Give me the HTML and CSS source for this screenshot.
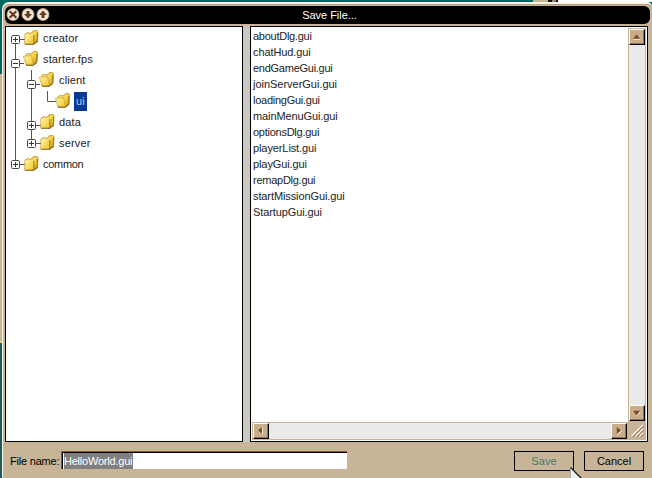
FILE: index.html
```html
<!DOCTYPE html>
<html lang="en">
<head>
<meta charset="utf-8">
<title>Save File...</title>
<link rel="stylesheet" href="styles.css">
</head>
<body>
<svg class="defs" width="0" height="0">
  <defs>
    <linearGradient id="gold" x1="0" y1="0" x2="1" y2="1">
      <stop offset="0" stop-color="#fff9a8"/><stop offset=".5" stop-color="#f5d54a"/><stop offset="1" stop-color="#c68e12"/>
    </linearGradient>
    <linearGradient id="face" x1="0" y1="0" x2="1" y2="1">
      <stop offset="0" stop-color="#fff6a0"/><stop offset="1" stop-color="#efc534"/>
    </linearGradient>
    <symbol id="closed" viewBox="0 0 15 15" overflow="visible">
      <path d="M1 4 4.5 2.5 6 3.5 9 2 9 .8 13 .5 14 1.5 13.5 11 9.5 14.2 .8 14Z" fill="url(#gold)" stroke="#b58a20" stroke-width=".8"/>
      <path d="M1.3 4.6 9 4 9.6 13.8 1 13.7Z" fill="url(#face)"/>
      <path d="M9.8 5V13.6L13.4 11V2.5" fill="none" stroke="#a87a12"/>
      <path d="M1 14.3H10L14 11.3" fill="none" stroke="#6f5010" stroke-width=".8"/>
    </symbol>
    <symbol id="open" viewBox="0 0 15 15" overflow="visible">
      <path d="M3 5 3.5 3 6 2.5 7 3 10 1.5 10.5.5 13.5.5 14.5 2 14 11 10 14.2 3 14Z" fill="url(#gold)" stroke="#b58a20" stroke-width=".8"/>
      <path d="M.4 5.3 8.5 4.3 10.4 13.8 3 13.7Z" fill="url(#face)" stroke="#c49726" stroke-width=".6"/>
      <path d="M10.6 13 13.8 10.8V3" fill="none" stroke="#a87a12"/>
      <path d="M3 14.3H10.4L14 11.5" fill="none" stroke="#6f5010" stroke-width=".8"/>
    </symbol>
    <symbol id="minus" viewBox="0 0 9 9">
      <rect x=".5" y=".5" width="8" height="8" rx="1.2" fill="#fff" stroke="#484848"/>
      <path d="M2 4.5H7" stroke="#333"/>
    </symbol>
    <symbol id="plus" viewBox="0 0 9 9">
      <use href="#minus"/><path d="M4.5 2V7" stroke="#333"/>
    </symbol>
  </defs>
</svg>
<div class="desktop">
  <div class="backdrop-top"><i class="b1"></i><i class="b2"></i><i class="b3"></i><i class="b4"></i></div>
  <div class="backdrop-left"></div>
  <main class="window">
    <header class="titlebar">
      <svg class="controls" width="46" height="18" viewBox="5 6 46 18">
        <g fill="#f0e4d4" stroke="#c9b08e" stroke-width=".8"><circle cx="13" cy="14.5" r="6"/><circle cx="28" cy="14.5" r="6"/><circle cx="43" cy="14.5" r="6"/></g>
        <path d="M9.7 11.2 16.3 17.8M16.3 11.2 9.7 17.8" stroke="#5d351c" stroke-width="2"/>
        <path d="M26.5 11H29.5V14H32L28 18.5 24 14H26.5Z M41.5 18H44.5V15H47L43 10.5 39 15H41.5Z" fill="#673c1e"/>
      </svg>
      <h1>Save File...</h1>
    </header>
    <section class="panes">
      <div class="tree">
        <div class="row"><svg width="35" height="21" viewBox="6 28 35 21"><path class="wire" d="M15.5 39V49M15 39.5H25"/><use href="#plus" x="11" y="35" width="9" height="9"/><use href="#closed" x="24" y="30" width="15" height="15"/></svg><span>creator</span></div>
        <div class="row"><svg width="35" height="21" viewBox="6 49 35 21"><path class="wire" d="M15.5 49V70M15 63.5H24"/><use href="#minus" x="11" y="59" width="9" height="9"/><use href="#open" x="23" y="51" width="15" height="15"/></svg><span>starter.fps</span></div>
        <div class="row"><svg width="51" height="21" viewBox="6 70 51 21"><path class="wire" d="M15.5 70V91M31.5 70V91M31 84.5H40"/><use href="#minus" x="27" y="80" width="9" height="9"/><use href="#open" x="39" y="72" width="15" height="15"/></svg><span>client</span></div>
        <div class="row"><svg width="67" height="21" viewBox="6 91 67 21"><path class="wire" d="M15.5 91V112M31.5 91V112M47.5 91V101.5H56"/><use href="#open" x="55" y="93" width="15" height="15"/></svg><span class="selected">ui</span></div>
        <div class="row"><svg width="51" height="21" viewBox="6 112 51 21"><path class="wire" d="M15.5 112V133M31.5 112V133M31 125.5H41"/><use href="#plus" x="27" y="121" width="9" height="9"/><use href="#closed" x="40" y="114" width="15" height="15"/></svg><span>data</span></div>
        <div class="row"><svg width="51" height="21" viewBox="6 133 51 21"><path class="wire" d="M15.5 133V154M31.5 133V143M31 143.5H41"/><use href="#plus" x="27" y="139" width="9" height="9"/><use href="#closed" x="40" y="135" width="15" height="15"/></svg><span>server</span></div>
        <div class="row"><svg width="35" height="21" viewBox="6 154 35 21"><path class="wire" d="M15.5 154V164M15 164.5H25"/><use href="#plus" x="11" y="160" width="9" height="9"/><use href="#closed" x="24" y="156" width="15" height="15"/></svg><span class="tight">common</span></div>
      </div>
      <div class="splitter"></div>
      <div class="files">
        <ul>
          <li class="tight">aboutDlg.gui</li><li>chatHud.gui</li><li class="tight">endGameGui.gui</li><li class="loose">joinServerGui.gui</li><li class="tight">loadingGui.gui</li><li>mainMenuGui.gui</li><li class="tight">optionsDlg.gui</li><li>playerList.gui</li><li>playGui.gui</li><li class="tight">remapDlg.gui</li><li>startMissionGui.gui</li><li>StartupGui.gui</li>
        </ul>
        <div class="vbar">
          <svg class="btn" viewBox="0 0 16 16"><path d="M4 10.5H12" stroke="#fff"/><path d="M3.5 10 7.5 5 11.5 10Z" fill="#7d4a26"/></svg>
          <svg class="btn" viewBox="0 0 16 16"><path d="M8 11 12 6.5" stroke="#fff"/><path d="M3.5 5.5H11.5L7.5 10.5Z" fill="#7d4a26"/></svg>
        </div>
        <div class="hbar">
          <svg class="btn" viewBox="0 0 16 16"><path d="M9.5 3.5V11.5L4.5 7.5" stroke="#fff" fill="none"/><path d="M9 3.5V11.5L4.5 7.5Z" fill="#7d4a26"/></svg>
          <svg class="btn" viewBox="0 0 16 16"><path d="M6 12 11 8" stroke="#fff"/><path d="M5.5 3.5V11.5L10 7.5Z" fill="#7d4a26"/></svg>
        </div>
        <svg class="grip" viewBox="0 0 18 18"><path d="M3.5 14.5 15 3M7.5 14.5 15 7M11.5 14.5 15 11" stroke="#fff" stroke-width="1.2"/><path d="M4.7 15 15.5 4.2M8.7 15 15.5 8.2M12.7 15 15.5 12.2" stroke="#8b5a34"/></svg>
      </div>
    </section>
    <footer>
      <label>File name:</label>
      <div class="field"><span>HelloWorld.gui</span></div>
      <div class="button save">Save</div>
      <div class="button">Cancel</div>
    </footer>
  </main>
  <svg class="cursor" width="14" height="12" viewBox="0 0 14 12"><path d="M.5 .5V20H19Z" fill="#f1f1f3" stroke="#aaa"/><path d="M.5 .5 13 13" stroke="#222" stroke-width="1.3"/></svg>
</div>
</body>
</html>
```
FILE: styles.css
```css
* { box-sizing: border-box; }
body { margin: 0; overflow: hidden; font: 11px/16px "Liberation Sans", Arial, sans-serif; color: #111; }
.defs { position: absolute; }
.desktop { position: relative; width: 652px; height: 478px; overflow: hidden; background: #006661; display: grid; grid-template: 2px 476px / 2px 650px; }
.backdrop-top { grid-column: 1 / 3; display: flex; background: #006661; }
.backdrop-top i { display: block; height: 2px; }
.b1 { width: 533px; }
.b2 { width: 15px; background: #c8b496; }
.b3 { width: 10px; background: linear-gradient(90deg, #111 0 4px, #8d8279 4px 8px, #111 8px); }
.b4 { flex: 1; background: #fff; }
.backdrop-left { background: linear-gradient(#006661 0 72px, #c8b496 72px 339px, #d8d850 339px 341px, #205c55 341px); }
.window { height: 480px; display: flex; flex-direction: column; background: #c8b496; border: 1px solid #f9f5e7; border-width: 2px 0 0 1px; border-radius: 7px 5px 0 6px; box-shadow: inset 0 1px #b19c80; padding: 2px 4px 0 2px; }
.titlebar { height: 18px; flex: none; background: #000; border-radius: 6px; display: grid; grid-template-columns: 46px 1fr 42px; margin-right: -2px; }
h1 { margin: 0; color: #fff; font-size: 11px; line-height: 18px; font-weight: 400; text-align: center; letter-spacing: -.03px; }
.panes { display: flex; height: 416px; margin-top: 2px; flex: none; }
.tree { width: 238px; border: 1px solid #000; background: #fff; padding-top: 1px; }
.row { display: flex; height: 21px; align-items: center; color: #222; letter-spacing: .15px; }
.row svg { flex: none; }
.row span { padding: 0 2px; height: 21px; line-height: 21px; }
.row .tight { letter-spacing: -.3px; }
.row .selected { margin-left: 1px; background: #073a91; color: #b9cbea; padding: 0 2px; height: 19px; line-height: 19px; }
.wire { fill: none; stroke: #555; }
.splitter { width: 7px; background: #cbc7c2; }
.files { flex: 1; background: #fff; border: 1px solid #000; display: grid; grid-template: 1fr 18px / 1fr 18px; padding: 1px; }
ul { margin: 0; padding: 0 0 0 1px; list-style: none; color: #222; }
li { letter-spacing: -.1px; }
li.tight { letter-spacing: -.26px; }
li.loose { letter-spacing: -.02px; }
.vbar, .hbar { background: #eaeaea; border: 1px solid #c8b496; display: flex; justify-content: space-between; }
.vbar { flex-direction: column; }
.btn { width: 16px; height: 16px; flex: none; background: #c8ad8a; border: 1px solid; border-color: #fff #000 #000 #fff; box-shadow: inset -1px -1px #94704c; }
.grip { width: 18px; height: 18px; background: #c8b496; }
footer { display: flex; height: 36px; align-items: flex-start; padding-top: 9px; }
label { width: 56px; padding-left: 5px; line-height: 20px; white-space: nowrap; color: #000; letter-spacing: -.2px; }
.field { width: 286px; height: 18px; background: #fff; border-top: 1px solid #875a34; border-left: 1px solid #875a34; box-shadow: inset 1px 1px #000; padding: 1px 0 0 1px; }
.field span { display: block; width: 69px; height: 16px; line-height: 16px; background: #808080; color: #fff; white-space: nowrap; letter-spacing: -.22px; margin-left: 1px; }
.button { width: 60px; height: 20px; border: 1px solid #000; line-height: 19px; text-align: center; margin: 0 4px 0 6px; color: #000; }
.button.save { margin-left: auto; color: #437b70; letter-spacing: .1px; }
.cursor { position: absolute; left: 570px; top: 467px; }
```
